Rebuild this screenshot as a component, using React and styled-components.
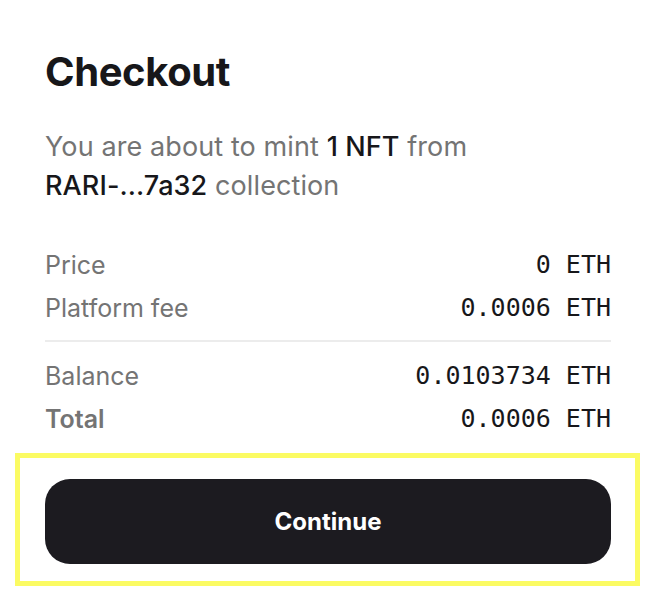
import React from "react";
import styled, { createGlobalStyle } from "styled-components";

const GlobalStyle = createGlobalStyle`
  body {
    margin: 0;
    background: #fff;
    font-family: Inter, "Noto Sans", sans-serif;
  }
`;

const rows = [
  { label: "Price", value: "0 ETH" },
  { label: "Platform fee", value: "0.0006 ETH" },
];

const totals = [
  { label: "Balance", value: "0.0103734 ETH" },
  { label: "Total", value: "0.0006 ETH", strong: true },
];

const App = () => {
  return (
    <>
      <GlobalStyle />
      <Page>
        <Title>Checkout</Title>
        <Intro>
          You are about to mint <b>1 NFT</b> from <b>RARI-...7a32</b> collection
        </Intro>
        <Summary>
          {rows.map((r) => (
            <Row key={r.label}>
              <Label>{r.label}</Label>
              <Value>{r.value}</Value>
            </Row>
          ))}
          <Divider />
          {totals.map((r) => (
            <Row key={r.label}>
              <Label $strong={r.strong}>{r.label}</Label>
              <Value>{r.value}</Value>
            </Row>
          ))}
        </Summary>
        <Highlight>
          <Button>Continue</Button>
        </Highlight>
      </Page>
    </>
  );
};

const Page = styled.div`
  width: 656px;
  padding: 48px 45px 0 45px;
  box-sizing: border-box;
  display: flex;
  flex-direction: column;
`;

const Title = styled.h1`
  margin: 0;
  font-size: 40px;
  line-height: 48px;
  font-weight: 700;
  color: #17171a;
  letter-spacing: -0.4px;
`;

const Intro = styled.p`
  margin: 31px 0 0;
  width: 470px;
  font-size: 27px;
  line-height: 39px;
  color: #747474;
  letter-spacing: 0.1px;

  b {
    font-weight: 500;
    color: #17171a;
  }
`;

const Summary = styled.div`
  margin-top: 38px;
  display: flex;
  flex-direction: column;
`;

const Row = styled.div`
  display: flex;
  justify-content: space-between;
  align-items: center;
  height: 43px;
`;

const Label = styled.span`
  font-size: 25px;
  color: #747474;
  font-weight: ${(p) => (p.$strong ? 600 : 400)};
`;

const Value = styled.span`
  font-family: "DejaVu Sans Mono", "Liberation Mono", monospace;
  font-size: 25px;
  color: #17171a;
`;

const Divider = styled.div`
  height: 2px;
  background: #ececec;
  margin: 11px 0 12px;
`;

const Highlight = styled.div`
  margin: 13px -29px 0 -30px;
  border: 5px solid #fbfb63;
  padding: 21px 24px 17px 25px;
`;

const Button = styled.button`
  width: 100%;
  height: 85px;
  border: none;
  border-radius: 25px;
  background: #1c1b20;
  color: #fff;
  font-family: Inter, "Noto Sans", sans-serif;
  font-size: 24px;
  font-weight: 700;
  cursor: pointer;
`;

export default App;
